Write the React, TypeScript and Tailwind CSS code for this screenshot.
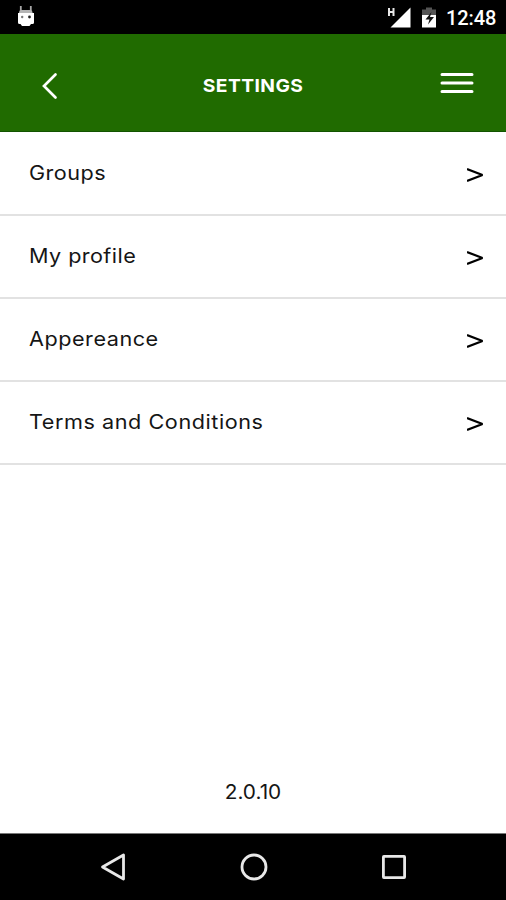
import React from 'react';

const items = [
  { label: 'Groups', tracking: 'tracking-[0.45px]' },
  { label: 'My profile', tracking: 'tracking-[0.4px]' },
  { label: 'Appereance', tracking: 'tracking-[0.5px]' },
  { label: 'Terms and Conditions', tracking: 'tracking-[0.52px]' },
];

const StatusBar = () => (
  <div className="flex h-[34px] shrink-0 items-center justify-between bg-black pr-[11px] pl-[17px] text-white">
    <svg className="mb-[2px] h-[22px] w-[18px]" viewBox="0 0 18 22">
      <path d="M3.800 1v5M13.800 1v5" stroke="#a8a8a8" strokeWidth="1.800" />
      <path d="M2 9V7.500Q2 5 4 5h9.500Q15.500 5 15.500 7.500V9z" fill="#b5b5b5" />
      <path d="M1 8h16v9.500q0 1.500-1.500 1.500H14l-1.500 2H5l-1.500-2H2.500Q1 19 1 17.500z" fill="#fff" />
      <circle cx="5.200" cy="12" r="1.200" fill="#777" />
      <circle cx="12.500" cy="12" r="1.400" fill="#222" />
    </svg>
    <div className="flex items-center">
      <svg className="h-[22px] w-6" viewBox="0 0 24 22">
        <path d="M2 2v8M6.500 2v8M2 6h4.500" stroke="#e8e8e8" strokeWidth="2" />
        <path d="M23.500 1.500v20H3.500z" fill="#fff" />
      </svg>
      <svg className="ml-[10px] h-[22px] w-[16px]" viewBox="0 0 16 22">
        <path d="M5 1.500h6v2h4V10H1V3.500h4z" fill="#555" />
        <path d="M1 9h14v12.500H1z" fill="#fff" />
        <path d="M10.500 6l-6 7.500h4l-1.500 5 6-7.500H9z" fill="#111" />
      </svg>
      <span className="mt-[2px] ml-[9px] w-[49px] text-[20px] leading-none font-medium tracking-[-0.1px] whitespace-nowrap [font-family:Roboto,sans-serif]">
        12:48
      </span>
    </div>
  </div>
);

const Header = () => (
  <header className="flex h-[98px] shrink-0 items-center justify-between border-b border-[#125400] bg-[#206b00] pr-8 pl-[41px] text-white">
    <svg className="mt-[6px] h-7 w-[26px]" viewBox="0 0 26 28" fill="none">
      <path d="M14.500 2.500L3 14l11.500 11.500" stroke="#fff" strokeWidth="2.700" strokeLinecap="round" />
    </svg>
    <h1 className="mt-[6px] scale-x-107 text-[18px] leading-6 font-bold tracking-[0.4px]">SETTINGS</h1>
    <svg className="h-6 w-[34px]" viewBox="0 0 34 24">
      <path d="M2 3.500h30M2 12h30M2 20.500h30" stroke="#fff" strokeWidth="3" strokeLinecap="round" />
    </svg>
  </header>
);

const NavigationBar = () => (
  <nav className="flex h-[67px] shrink-0 items-center justify-between border-t border-[#777] bg-black pr-[98px] pl-[100px]">
    <svg className="h-7 w-7" viewBox="0 0 28 28" fill="none">
      <path d="M23.500 2v24L2.500 14z" stroke="#e8e8e8" strokeWidth="2.800" strokeLinejoin="round" />
    </svg>
    <svg className="h-7 w-7" viewBox="0 0 28 28" fill="none">
      <circle cx="14" cy="14" r="12" stroke="#e8e8e8" strokeWidth="2.800" />
    </svg>
    <svg className="h-7 w-7" viewBox="0 0 28 28" fill="none">
      <rect x="3.400" y="3.400" width="21.200" height="21.200" rx="0.500" stroke="#e8e8e8" strokeWidth="2.800" />
    </svg>
  </nav>
);

const App = () => {
  return (
    <div className="flex h-screen flex-col overflow-hidden bg-white text-black [font-family:Inter,sans-serif]">
      <StatusBar />
      <Header />
      <main className="flex flex-1 flex-col">
        <ul>
          {items.map((item) => (
            <li
              key={item.label}
              className="flex h-[83px] items-center justify-between border-b-2 border-[#e2e2e2] pr-[22px] pl-[29px] first:h-[84px]"
            >
              <span className={`-mt-px origin-left scale-x-108 text-[20px] leading-7 text-[#151515] ${item.tracking}`}>
                {item.label}
              </span>
              <svg className="mt-[3px] h-4 w-[17px]" viewBox="0 0 17 16" fill="none">
                <path d="M0 2l15.500 6L0 14" stroke="#000" strokeWidth="2.200" strokeLinejoin="bevel" />
              </svg>
            </li>
          ))}
        </ul>
        <p className="mt-auto mb-[27px] scale-x-104 text-center text-[20px] leading-7 text-[#151515]">2.0.10</p>
      </main>
      <NavigationBar />
    </div>
  );
};

export default App;
